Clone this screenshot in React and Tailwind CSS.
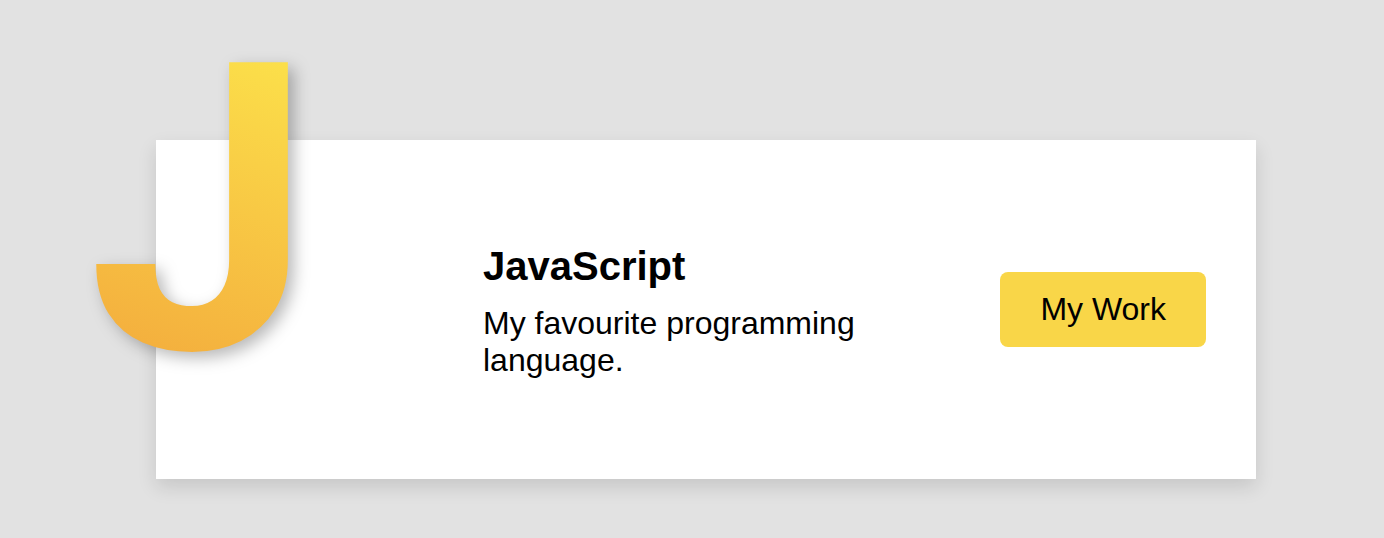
import React from 'react';

export default function App() {
  return (
    <div
      className="min-h-[538px] w-full bg-[#e2e2e2] pt-[140px] pl-[156px]"
      style={{ fontFamily: '"Liberation Sans", Arial, sans-serif' }}
    >
      <div className="relative flex h-[339px] w-[1100px] items-center bg-white pl-[327px] pr-[50px] shadow-[0_8px_18px_rgba(0,0,0,0.12)]">
        <span
          className="absolute left-[-68px] top-[-130px] bg-linear-[200deg] from-[#fde84c] to-[#f2a43b] bg-clip-text text-[402px] font-bold leading-none text-transparent drop-shadow-[6px_6px_8px_rgba(0,0,0,0.28)] select-none"
          style={{ fontFamily: 'Roboto, "Liberation Sans", sans-serif' }}
        >
          J
        </span>
        <div className="w-[400px] text-black">
          <h2 className="text-[40px] font-bold leading-tight">JavaScript</h2>
          <p className="mt-[14px] text-[32px] leading-[1.15]">
            My favourite programming language.
          </p>
        </div>
        <button className="ml-auto rounded-lg bg-[#f9d648] px-10 py-[19px] text-[32px] leading-[1.15] text-black">
          My Work
        </button>
      </div>
    </div>
  );
}
